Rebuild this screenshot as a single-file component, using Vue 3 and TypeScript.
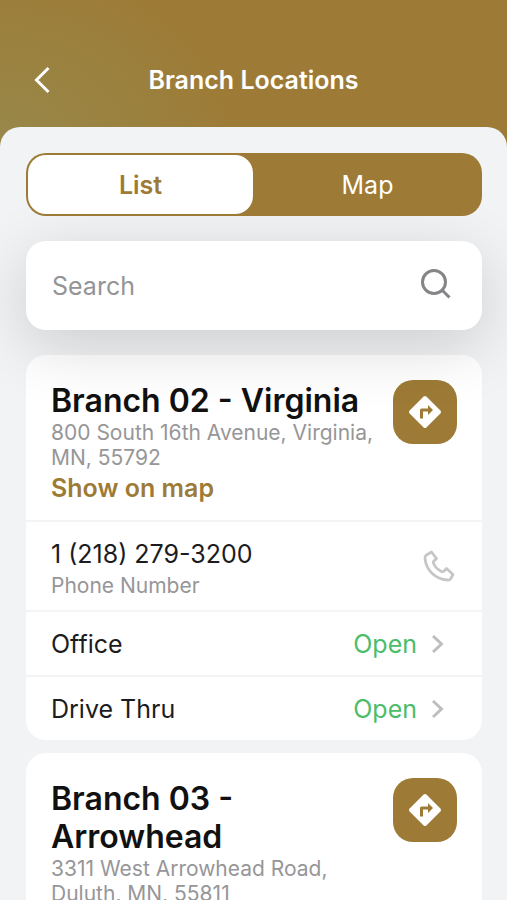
<script setup lang="ts">
import { ref } from 'vue'

interface Service {
  name: string
  status: string
}

interface Branch {
  id: string
  name: string
  address: string
  mapLink?: string
  phone?: string
  services: Service[]
}

const view = ref<'list' | 'map'>('list')
const query = ref('')

const branches: Branch[] = [
  {
    id: '02',
    name: 'Branch 02 - Virginia',
    address: '800 South 16th Avenue, Virginia, MN, 55792',
    mapLink: 'Show on map',
    phone: '1 (218) 279-3200',
    services: [
      { name: 'Office', status: 'Open' },
      { name: 'Drive Thru', status: 'Open' },
    ],
  },
  {
    id: '03',
    name: 'Branch 03 - Arrowhead',
    address: '3311 West Arrowhead Road, Duluth, MN, 55811',
    services: [],
  },
]
</script>

<template>
  <div class="app">
    <header class="header">
      <button class="back" type="button">
        <svg width="32" height="32" viewBox="0 0 32 32" fill="none">
          <path d="M22.500 4 10.500 16l12 12" stroke="#fff" stroke-width="3" />
        </svg>
      </button>
      <h1 class="title">Branch Locations</h1>
    </header>

    <main class="sheet">
      <div class="controls">
        <div class="toggle">
          <button
            class="tab"
            :class="{ active: view === 'list' }"
            type="button"
            @click="view = 'list'"
          >
            List
          </button>
          <button
            class="tab"
            :class="{ active: view === 'map' }"
            type="button"
            @click="view = 'map'"
          >
            Map
          </button>
        </div>

        <label class="search">
          <input v-model="query" class="search-input" type="text" placeholder="Search" />
          <svg width="32" height="36" viewBox="0 0 32 36" fill="none" stroke="#858587" stroke-width="3">
            <circle cx="14" cy="14" r="11.500" />
            <path d="m22 22 7.500 7.500" />
          </svg>
        </label>
      </div>

      <div class="list">
        <article v-for="branch in branches" :key="branch.id" class="card">
          <div class="summary">
            <div class="info">
              <h2 class="name">{{ branch.name }}</h2>
              <p class="address">{{ branch.address }}</p>
              <a v-if="branch.mapLink" class="map-link" href="#map">{{ branch.mapLink }}</a>
            </div>
            <button class="directions" type="button">
              <svg width="34" height="34" viewBox="0 0 34 34">
                <path
                  d="M15.600 1.600a2 2 0 0 1 2.800 0l14 14a2 2 0 0 1 0 2.800l-14 14a2 2 0 0 1-2.800 0l-14-14a2 2 0 0 1 0-2.800Z"
                  fill="#fff"
                />
                <path d="M12 23.500v-8.500a1.500 1.500 0 0 1 1.500-1.500H20V10l5 5-5 5v-3.500h-5v7Z" fill="#9d7b36" />
              </svg>
            </button>
          </div>

          <a v-if="branch.phone" class="row phone" href="tel:12182793200">
            <span class="phone-text">
              <span class="label">{{ branch.phone }}</span>
              <span class="caption">Phone Number</span>
            </span>
            <svg width="36" height="36" viewBox="0 0 36 36" fill="none" stroke="#c6c6c6" stroke-width="2.800" stroke-linejoin="round">
              <path
                d="M10.500 4 15.500 10.500 12.500 13.500Q12 14.500 12.800 16C14.500 19.500 16.500 21.500 20.500 23.500Q22 24 23 23.200L25.500 20.500 32 26.500 29.500 31Q28.500 32.300 26.500 32C14 31 5 22 4 10.500Q3.800 8 5.500 7Z"
              />
            </svg>
          </a>

          <button v-for="service in branch.services" :key="service.name" class="row" type="button">
            <span class="label">{{ service.name }}</span>
            <span class="status">{{ service.status }}</span>
            <svg class="chevron" width="16" height="20" viewBox="0 0 16 20" fill="none">
              <path d="m3 2 8.500 8L3 18" stroke="#bebebe" stroke-width="3" />
            </svg>
          </button>
        </article>
      </div>
    </main>
  </div>
</template>

<style>
body {
  background: #f1f3f5;
}
</style>

<style scoped>
.app {
  display: flex;
  flex-direction: column;
  height: 100vh;
  overflow: hidden;
  font-family: Inter, 'Liberation Sans', sans-serif;
  background: radial-gradient(ellipse 240px 180px at 0 140px, #98884a, #9d7b36);
}

.app * {
  box-sizing: border-box;
}

button {
  padding: 0;
  border: 0;
  background: none;
  font: inherit;
  cursor: pointer;
}

a {
  text-decoration: none;
}

svg {
  display: block;
  flex: none;
}

.header {
  display: grid;
  grid-template-columns: 32px 1fr 32px;
  align-items: center;
  padding: 64px 26px 31px;
}

.title {
  margin: 0;
  color: #fff;
  font-size: 25px;
  font-weight: 600;
  line-height: 32px;
  text-align: center;
}

.sheet {
  display: flex;
  flex: 1;
  flex-direction: column;
  min-height: 0;
  border-radius: 20px 20px 0 0;
  background: #f1f3f5;
  overflow: hidden;
}

.controls {
  position: relative;
  z-index: 1;
  display: flex;
  flex-direction: column;
  gap: 25px;
  padding: 26px 25px 0 26px;
}

.toggle {
  position: relative;
  z-index: 1;
  display: grid;
  grid-template-columns: 1fr 1fr;
  gap: 2px;
  padding: 2px;
  border-radius: 20px;
  background: #9d7b36;
}

.tab {
  height: 59px;
  border-radius: 18px;
  color: #fff;
  font-size: 25px;
}

.tab.active {
  background: #fff;
  color: #9d7b36;
  font-weight: 600;
}

.search {
  display: flex;
  align-items: center;
  gap: 16px;
  height: 89px;
  padding: 0 30px 0 26px;
  border-radius: 20px;
  background: #fff;
  box-shadow: 0 16px 64px rgba(0, 0, 0, 0.16);
}

.search-input {
  flex: 1;
  min-width: 0;
  padding: 0;
  border: 0;
  outline: 0;
  background: none;
  color: #1c1c1e;
  font: inherit;
  font-size: 25px;
}

.search-input::placeholder {
  color: #949496;
  opacity: 1;
}

.list {
  flex: 1;
  min-height: 0;
  padding: 25px 25px 0 26px;
  overflow-y: auto;
  scrollbar-width: none;
}

.card {
  border-radius: 20px;
  background: #fff;
  overflow: hidden;
}

.card + .card {
  margin-top: 13px;
}

.summary {
  display: flex;
  align-items: flex-start;
  justify-content: space-between;
  gap: 16px;
  padding: 25px 25px 16px;
}

.info {
  min-width: 0;
  padding-top: 2px;
}

.name {
  margin: 0;
  color: #111;
  font-size: 32px;
  font-weight: 600;
  line-height: 38px;
}

.address {
  margin: 0;
  color: #969698;
  font-size: 21px;
  line-height: 25px;
}

.map-link {
  display: block;
  margin-top: 2px;
  color: #9d7b36;
  font-size: 25px;
  font-weight: 600;
  line-height: 32px;
}

.directions {
  display: grid;
  flex: none;
  place-items: center;
  width: 64px;
  height: 64px;
  border-radius: 20px;
  background: #9d7b36;
}

.row {
  display: flex;
  align-items: center;
  width: 100%;
  height: 65px;
  padding: 0 36px 0 25px;
  border-top: 2px solid #f3f4f5;
  text-align: left;
}

.row.phone {
  height: 90px;
  padding-right: 25px;
}

.phone-text {
  display: flex;
  flex: 1;
  flex-direction: column;
  padding-top: 8px;
}

.label {
  flex: 1;
  color: #1c1c1e;
  font-size: 25px;
  line-height: 32px;
}

.caption {
  color: #969698;
  font-size: 21px;
  line-height: 32px;
}

.status {
  margin-right: 13px;
  color: #4bbd69;
  font-size: 25px;
  line-height: 32px;
}
</style>
